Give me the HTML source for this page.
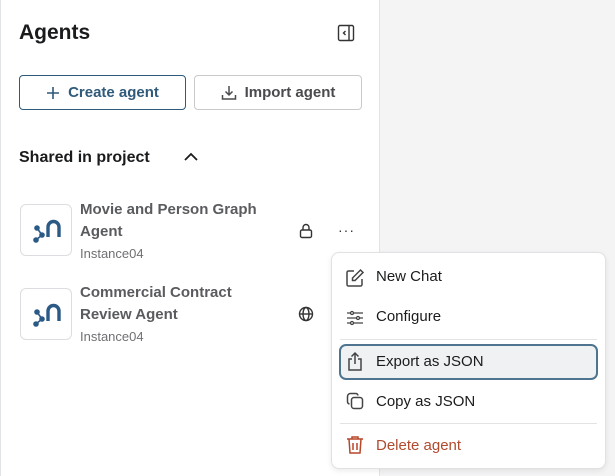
<!DOCTYPE html>
<html><head><meta charset="utf-8"><style>
*{margin:0;padding:0;box-sizing:border-box}
body{width:615px;height:476px;background:#f4f4f5;font-family:"Liberation Sans",sans-serif;position:relative;overflow:hidden}
.panel{position:absolute;left:0;top:0;width:380px;height:476px;background:#fff;border-left:1px solid #e2e3e5;border-right:1px solid #e2e3e5}
.abs{position:absolute}
h1{position:absolute;left:18px;top:21px;font-size:21px;font-weight:bold;color:#1a1b1d}
.btn{position:absolute;top:75px;height:35px;border-radius:4px;font-size:15px;font-weight:bold;display:flex;align-items:center;justify-content:center;gap:8px}
.b1{left:18px;width:167px;border:1px solid #2f5a7a;color:#2f5a7a}
.b2{left:193px;width:168px;border:1px solid #c9cacc;color:#4a4b4e}
.sh{left:18px;top:149px;font-size:16px;font-weight:bold;color:#1a1b1d}
.logo{position:absolute;left:19px;width:52px;height:52px;border:1px solid #dcdde0;border-radius:6px}
.t{position:absolute;left:79px;font-size:15px;font-weight:bold;color:#5a5b5e;line-height:22px}
.s{position:absolute;left:79px;font-size:13px;color:#6f7073}
.menu{position:absolute;left:331px;top:252px;width:275px;height:217px;background:#fff;border:1px solid #e0e1e3;border-radius:8px;box-shadow:0 2px 6px rgba(0,0,0,.08)}
.it{position:absolute;left:44px;font-size:15px;color:#1a1b1d}
.hr{position:absolute;left:8px;right:8px;height:1px;background:#e2e3e5}
</style></head><body>
<div class="panel">
<h1>Agents</h1>
<svg class="abs" style="left:336px;top:24px" width="18" height="18" viewBox="0 0 18 18" fill="none" stroke="#333" stroke-width="1.4"><rect x="1.5" y="1.5" width="15" height="15" rx="1.5"/><line x1="12" y1="2" x2="12" y2="16"/><path d="M8.5 7l-2 2 2 2"/></svg>
<div class="btn b1"><svg width="14" height="14" viewBox="0 0 14 14" stroke="#2f5a7a" stroke-width="1.6"><path d="M7 1v12M1 7h12"/></svg>Create agent</div>
<div class="btn b2"><svg width="16" height="16" viewBox="0 0 16 16" fill="none" stroke="#4a4b4e" stroke-width="1.5"><path d="M8 1v9M4.5 6.5L8 10l3.5-3.5M1.5 10v4h13v-4"/></svg>Import agent</div>
<div class="abs sh">Shared in project</div>
<svg class="abs" style="left:182px;top:151px" width="16" height="12" viewBox="0 0 16 12" fill="none" stroke="#1a1b1d" stroke-width="1.8"><path d="M2 9l6-6 6 6"/></svg>

<div class="logo" style="top:204px"><svg width="52" height="52" viewBox="0 0 52 52" fill="none"><path d="M27 32v-10a5.5 5.5 0 0 1 11 0v10" stroke="#2a5a85" stroke-width="3.4"/><circle cx="16" cy="23" r="2.8" fill="#2a5a85"/><circle cx="21" cy="30" r="2.8" fill="#2a5a85"/><circle cx="15" cy="35" r="2.8" fill="#2a5a85"/><path d="M16 23l5 7-6 5" stroke="#2a5a85" stroke-width="1.6"/></svg></div>
<div class="t" style="top:199px">Movie and Person Graph<br>Agent</div>
<div class="s" style="top:246px">Instance04</div>
<svg class="abs" style="left:297px;top:222px" width="16" height="17" viewBox="0 0 16 17" fill="none" stroke="#333" stroke-width="1.4"><rect x="2.5" y="8" width="11" height="7.5" rx="1.5"/><path d="M5 8V5.5a3 3 0 0 1 6 0V8"/></svg>
<div class="abs" style="left:337px;top:222px;font-size:14px;color:#333;letter-spacing:1px">···</div>

<div class="logo" style="top:288px"><svg width="52" height="52" viewBox="0 0 52 52" fill="none"><path d="M27 32v-10a5.5 5.5 0 0 1 11 0v10" stroke="#2a5a85" stroke-width="3.4"/><circle cx="16" cy="23" r="2.8" fill="#2a5a85"/><circle cx="21" cy="30" r="2.8" fill="#2a5a85"/><circle cx="15" cy="35" r="2.8" fill="#2a5a85"/><path d="M16 23l5 7-6 5" stroke="#2a5a85" stroke-width="1.6"/></svg></div>
<div class="t" style="top:282px">Commercial Contract<br>Review Agent</div>
<div class="s" style="top:329px">Instance04</div>
<svg class="abs" style="left:297px;top:306px" width="16" height="16" viewBox="0 0 16 16" fill="none" stroke="#333" stroke-width="1.4"><circle cx="8" cy="8" r="6.5"/><ellipse cx="8" cy="8" rx="3" ry="6.5"/><path d="M1.5 8h13"/></svg>
</div>

<div class="menu">
<svg class="abs" style="left:13px;top:15px" width="20" height="20" viewBox="0 0 20 20" fill="none" stroke="#444" stroke-width="1.5"><path d="M9 3H3.5A1.5 1.5 0 0 0 2 4.5v12A1.5 1.5 0 0 0 3.5 18h12a1.5 1.5 0 0 0 1.5-1.5V11"/><path d="M15.5 2l2.5 2.5-8 8H7.5V10z"/></svg>
<div class="it" style="top:15px">New Chat</div>
<svg class="abs" style="left:13px;top:56px" width="20" height="18" viewBox="0 0 20 18" fill="none" stroke="#444" stroke-width="1.3"><path d="M2 4h16M2 9h16M2 14h16"/><circle cx="7" cy="4" r="1.5" fill="#fff"/><circle cx="13" cy="9" r="1.5" fill="#fff"/><circle cx="7" cy="14" r="1.5" fill="#fff"/></svg>
<div class="it" style="top:55px">Configure</div>
<div class="hr" style="top:86px"></div>
<div class="abs" style="left:7px;top:91px;width:259px;height:36px;border:2px solid #4e7490;border-radius:7px;background:#eff1f3"></div>
<svg class="abs" style="left:14px;top:98px" width="18" height="21" viewBox="0 0 18 21" fill="none" stroke="#444" stroke-width="1.5"><path d="M6 8H3v11h12V8h-3M9 13V2M5.5 5.5L9 2l3.5 3.5"/></svg>
<div class="it" style="top:100px">Export as JSON</div>
<svg class="abs" style="left:14px;top:139px" width="18" height="18" viewBox="0 0 18 18" fill="none" stroke="#444" stroke-width="1.5"><rect x="5.5" y="5.5" width="11" height="11" rx="2.5"/><path d="M12 3.5A2.5 2.5 0 0 0 9.5 1.5h-5A3 3 0 0 0 1.5 4.5v5A2.5 2.5 0 0 0 3.5 12"/></svg>
<div class="it" style="top:140px">Copy as JSON</div>
<div class="hr" style="top:170px"></div>
<svg class="abs" style="left:14px;top:182px" width="18" height="20" viewBox="0 0 18 20" fill="none" stroke="#b8472a" stroke-width="1.5"><path d="M1 4h16M6 4V2h6v2M3 4l1 14h10l1-14M7 8v7M11 8v7"/></svg>
<div class="it" style="top:184px;color:#b14a2c">Delete agent</div>
</div>
</body></html>
